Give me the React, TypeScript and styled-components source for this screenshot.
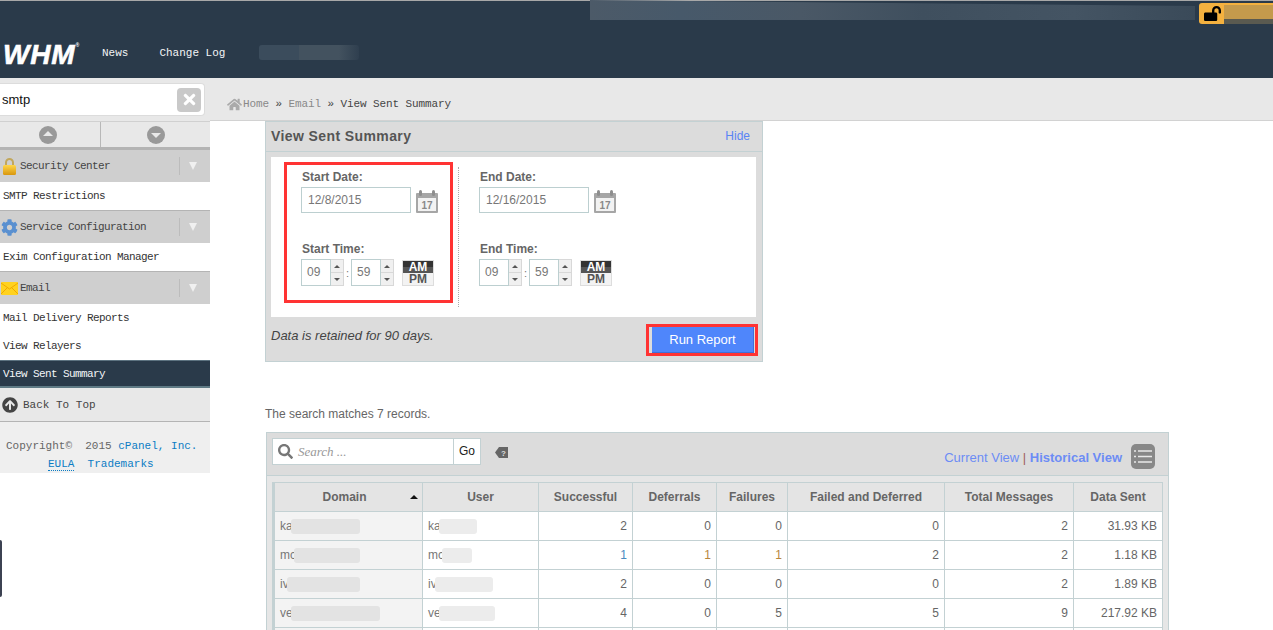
import React from 'react';
import styled, { createGlobalStyle } from 'styled-components';
import { FaArrowCircleUp, FaCog, FaHome, FaLockOpen, FaSearch, FaTimes } from 'react-icons/fa';

const mono = `"Liberation Mono", monospace`;
const sans = `"Liberation Sans", Arial, sans-serif`;

const GlobalStyle = createGlobalStyle`
  html, body {
    margin: 0;
    padding: 0;
    height: 100%;
    overflow: hidden;
    background: #fff;
    font-family: ${sans};
  }
  * { box-sizing: border-box; }
`;

const Page = styled.div`
  position: relative;
  width: 1273px;
  height: 630px;
  overflow: hidden;
  display: flex;
  flex-direction: column;
`;

/* header */
const Header = styled.header`
  height: 78px;
  flex: none;
  background: #2a3a4a;
  border-top: 1px solid #a8a8a8;
  display: flex;
  flex-direction: column;
`;

const TopStrip = styled.div`
  height: 23px;
  display: flex;
  justify-content: flex-end;
  align-items: flex-start;
  margin-top: -1px;
`;

const TopSmudge = styled.div`
  width: 605px;
  height: 20px;
  margin-right: 4px;
  background: linear-gradient(90deg, #4c5a68 0, #47596a 15%, #4a5866 35%, #3f4f5e 55%, #445463 80%, #3a4a59 100%);
  clip-path: polygon(0 0, 100% 30%, 100% 100%, 0 100%);
`;

const LockBadge = styled.div`
  width: 74px;
  height: 21px;
  margin-top: 3px;
  background: #f4b13f;
  border-radius: 3px 0 0 3px;
  display: flex;
  align-items: flex-start;
  padding: 2px 0 0 5px;
  color: #000;
  font-size: 17px;
  line-height: 1;
`;

const LockSmudge = styled.div`
  margin: 0 0 0 3px;
  flex: 1;
  height: 19px;
  background: linear-gradient(180deg, #c49a4c 0 75%, #5a5a50 75% 100%);
`;

const NavRow = styled.div`
  flex: 1;
  display: flex;
  align-items: center;
  padding: 6px 0 0 3px;
`;

const Logo = styled.div`
  width: 99px;
  margin-top: 2px;
  font: italic 700 28px/1 ${sans};
  letter-spacing: 0.8px;
  color: #fff;
  -webkit-text-stroke: 0.6px #fff;
  sup {
    font-size: 5px;
    letter-spacing: 0;
    -webkit-text-stroke: 0;
    vertical-align: 17px;
    line-height: 0;
  }
`;

const NavLink = styled.a`
  font: 11px/1 ${mono};
  color: #f2f4f6;
  margin-right: 31px;
`;

const NavSmudge = styled.div`
  width: 100px;
  height: 15px;
  margin: -2px 0 0 3px;
  border-radius: 3px;
  background: linear-gradient(90deg, #3b4c5c 0 40%, #43525f 40% 80%, #2f3f4f 100%);
`;

const Body = styled.div`
  flex: 1;
  display: flex;
  min-height: 0;
`;

/* sidebar */
const Sidebar = styled.aside`
  width: 210px;
  flex: none;
  display: flex;
  flex-direction: column;
`;

const SearchZone = styled.div`
  height: 43px;
  background: #e8e8e8;
  padding: 5px 5px 5px 0;
`;

const SearchBox = styled.div`
  height: 33px;
  background: #fff;
  border: 1px solid #dcdcdc;
  border-left: 0;
  border-radius: 0 4px 4px 0;
  display: flex;
  align-items: center;
  justify-content: space-between;
  padding: 0 3px 0 2px;
  font-size: 13px;
  color: #111;
`;

const ClearButton = styled.span`
  width: 24px;
  height: 24px;
  border-radius: 4px;
  background: #c9c9c9;
  color: #fff;
  display: flex;
  align-items: center;
  justify-content: center;
  font-size: 17px;
`;

const Pager = styled.div`
  height: 28px;
  display: flex;
  background: #e8e8e8;
  border-top: 1px solid #d0d0d0;
  border-bottom: 2px solid #b4b4b4;
`;

const PagerCell = styled.div<{ $grow?: boolean }>`
  flex: ${(p) => (p.$grow ? 1 : 'none')};
  width: ${(p) => (p.$grow ? 'auto' : '100px')};
  padding-right: ${(p) => (p.$grow ? '0' : '4px')};
  display: flex;
  align-items: center;
  justify-content: center;
  & + & { border-left: 1px solid #b8b8b8; }
`;

const PagerButton = styled.span<{ $down?: boolean }>`
  width: 18px;
  height: 18px;
  border-radius: 50%;
  background: #999;
  position: relative;
  &::after {
    content: '';
    position: absolute;
    left: 4px;
    top: ${(p) => (p.$down ? '7px' : '5px')};
    border-left: 5px solid transparent;
    border-right: 5px solid transparent;
    ${(p) => (p.$down ? 'border-top: 5px solid #e8e8e8;' : 'border-bottom: 5px solid #e8e8e8;')}
  }
`;

const SectionHead = styled.div`
  height: 33px;
  background: #cfcfcf;
  border-top: 1px solid #b4b4b4;
  display: flex;
  align-items: center;
  padding-left: 1px;
  font: 11px/1 ${mono};
  letter-spacing: -0.6px;
  color: #444;
`;

const SectionIcon = styled.span`
  width: 17px;
  height: 17px;
  margin-right: 2px;
  display: flex;
  align-items: center;
  justify-content: center;
  flex: none;
`;

const SectionTitle = styled.span`
  flex: 1;
`;

const SectionToggle = styled.span`
  width: 28px;
  height: 18px;
  margin-right: 3px;
  border-left: 1px solid #bcbcbc;
  padding-right: 2px;
  display: flex;
  align-items: center;
  justify-content: center;
  &::after {
    content: '';
    border-left: 4px solid transparent;
    border-right: 4px solid transparent;
    border-top: 8px solid #f0f0f0;
  }
`;

const MenuItem = styled.a<{ $active?: boolean }>`
  display: flex;
  align-items: center;
  height: 28px;
  padding: ${(p) => (p.$active ? '1px 0 0 3px' : '0 0 0 3px')};
  font: 11px/1 ${mono};
  letter-spacing: -0.6px;
  background: ${(p) => (p.$active ? '#2a3a4a' : '#fff')};
  color: ${(p) => (p.$active ? '#f4f6f8' : '#333')};
  ${(p) => p.$active && 'border-top: 1px solid #5c7280; border-bottom: 2px solid #5f7a85;'}
`;

const BackToTop = styled.a`
  height: 34px;
  background: #e8e8e8;
  border-bottom: 1px solid #b4b4b4;
  display: flex;
  align-items: center;
  gap: 5px;
  padding: 1px 0 0 2px;
  font: 11px/1 ${mono};
  color: #444;
  svg { color: #444; font-size: 16px; }
`;

const SideFooter = styled.div`
  height: 51px;
  background: #efefef;
  padding-top: 15px;
  font: 11px/18px ${mono};
  color: #666;
`;

const FooterLine = styled.div<{ $indent: number }>`
  padding-left: ${(p) => p.$indent}px;
  white-space: pre;
`;

const FooterLink = styled.a<{ $dotted?: boolean }>`
  color: #0b7cc4;
  ${(p) => p.$dotted && 'border-bottom: 1px dotted #0b7cc4;'}
`;

/* main area */
const Main = styled.main`
  flex: 1;
  min-width: 0;
  display: flex;
  flex-direction: column;
`;

const Breadcrumb = styled.nav`
  height: 43px;
  flex: none;
  background: #e8e8e8;
  border-bottom: 1px solid #d2d2d2;
  display: flex;
  align-items: center;
  padding: 11px 0 0 17px;
  font: 11px/1 ${mono};
  letter-spacing: -0.1px;
  white-space: pre;
  color: #444;
  svg { color: #aaa; font-size: 15px; margin-right: 1px; }
`;

const Crumb = styled.a`
  color: #888;
`;

const Content = styled.div`
  padding-left: 55px;
`;

const Panel = styled.section`
  width: 498px;
  height: 241px;
  background: #dcdcdc;
  border: 1px solid #c3d1d3;
  display: flex;
  flex-direction: column;
`;

const PanelHead = styled.div`
  height: 30px;
  flex: none;
  border-bottom: 1px solid #c3d1d3;
  display: flex;
  align-items: center;
  justify-content: space-between;
  padding: 0 12px 2px 5px;
`;

const PanelTitle = styled.h2`
  margin: 0;
  font: 700 14px/1 ${sans};
  letter-spacing: 0.4px;
  color: #555;
`;

const HideLink = styled.a`
  font-size: 12px;
  color: #5a84f5;
`;

const FormBox = styled.div`
  height: 160px;
  margin: 5px 6px 0 5px;
  background: #fff;
  padding: 5px 0 0 13px;
  display: flex;
  align-items: flex-start;
`;

const DateColumn = styled.div<{ $marked?: boolean }>`
  width: 169px;
  height: 141px;
  flex: none;
  border: 3px solid ${(p) => (p.$marked ? '#ff3333' : 'transparent')};
  padding: 5px 0 0 14px;
  display: flex;
  flex-direction: column;
`;

const Dots = styled.div`
  width: 1px;
  height: 140px;
  flex: none;
  margin: 5px 3px 0 5px;
  border-left: 1px dotted #aaa;
`;

const FieldLabel = styled.label`
  display: block;
  margin: 0 0 3px 1px;
  font: 700 12px/14px ${sans};
  color: #666;
`;

const DateRow = styled.div`
  display: flex;
  align-items: flex-end;
  gap: 5px;
  height: 26px;
  margin-bottom: 29px;
`;

const DateInput = styled.div`
  width: 110px;
  height: 26px;
  border: 1px solid #bccfd0;
  padding-left: 6px;
  font: 12px/24px ${sans};
  color: #777;
`;

const TimeRow = styled.div`
  display: flex;
  align-items: center;
  height: 27px;
`;

const TimeValue = styled.div`
  width: 30px;
  height: 27px;
  border: 1px solid #bccfd0;
  padding-left: 5px;
  font: 12px/25px ${sans};
  color: #777;
`;

const Stepper = styled.div`
  width: 13px;
  height: 27px;
  background: #f0f0f0;
  border: 1px solid #d8d8d8;
  border-left: 0;
  display: flex;
  flex-direction: column;
`;

const StepButton = styled.span<{ $down?: boolean }>`
  flex: 1;
  display: flex;
  align-items: center;
  justify-content: center;
  ${(p) => p.$down && 'border-top: 1px solid #d8d8d8;'}
  &::after {
    content: '';
    border-left: 3px solid transparent;
    border-right: 3px solid transparent;
    ${(p) => (p.$down ? 'border-top: 3px solid #555;' : 'border-bottom: 3px solid #555;')}
  }
`;

const Colon = styled.span`
  width: 7px;
  text-align: center;
  font-size: 11px;
  color: #777;
`;

const Meridiem = styled.div`
  width: 32px;
  height: 26px;
  margin-left: 8px;
  border: 1px solid #ddd;
  background: #f3f3f3;
  display: flex;
  flex-direction: column;
  font: 700 12px/12px ${sans};
  text-align: center;
  color: #555;
`;

const MeridiemOn = styled.span`
  height: 12px;
  background: linear-gradient(180deg, #333 0 50%, #555 50% 100%);
  color: #fff;
`;

const PanelFoot = styled.div`
  flex: 1;
  display: flex;
  align-items: flex-start;
  justify-content: space-between;
  padding: 11px 4px 0 5px;
`;

const Note = styled.p`
  margin: 0;
  font: italic 13px/16px ${sans};
  color: #444;
`;

const RunFrame = styled.div`
  width: 112px;
  height: 32px;
  margin-top: -4px;
  border: 3px solid #ff3333;
  padding: 0 0 0 3px;
`;

const RunButton = styled.button`
  display: block;
  width: 102px;
  height: 26px;
  padding: 0;
  border: 0;
  border-right: 1px solid #3f6fd8;
  border-bottom: 1px solid #3f6fd8;
  background: #4f86fb;
  color: #fff;
  font: 13px/1 ${sans};
`;

const Matches = styled.p`
  margin: 45px 0 11px 0;
  font: 12px/14px ${sans};
  color: #666;
`;

const TablePanel = styled.section`
  width: 903px;
  margin-left: 1px;
  background: #e6e6e6;
  border: 1px solid #c3d1d3;
  padding-bottom: 20px;
`;

const TableBar = styled.div`
  height: 43px;
  background: #dcdcdc;
  border-bottom: 1px solid #c3d1d3;
  display: flex;
  align-items: flex-start;
  padding: 5px 13px 0 5px;
`;

const SearchField = styled.div`
  width: 182px;
  height: 27px;
  background: #fff;
  border: 1px solid #c3d1d3;
  display: flex;
  align-items: center;
  padding-left: 5px;
  gap: 5px;
  font: italic 13px/1 "Liberation Serif", serif;
  color: #999;
  svg { color: #777; font-size: 15px; }
`;

const GoButton = styled.div`
  width: 27px;
  height: 27px;
  background: #fff;
  border: 1px solid #c3d1d3;
  border-left: 0;
  font: 12px/25px ${sans};
  text-align: center;
  color: #222;
`;

const TagIcon = styled.svg`
  width: 13px;
  height: 13px;
  margin: 8px 0 0 14px;
`;

const ViewLinks = styled.div`
  margin: 12px 9px 0 auto;
  font: 13px/16px ${sans};
  color: #a06060;
`;

const ViewLink = styled.a<{ $current?: boolean }>`
  color: #6c8cf5;
  font-weight: ${(p) => (p.$current ? 700 : 400)};
`;

const ListIcon = styled.svg`
  width: 24px;
  height: 25px;
  margin-top: 6px;
`;

const StatsTable = styled.table`
  width: 889px;
  margin: 6px 0 0 5px;
  border-collapse: collapse;
  table-layout: fixed;
  border-left: 3px solid #c3d1d3;
  font: 12px/1 ${sans};
  color: #666;
`;

const HeadCell = styled.th<{ $sorted?: boolean }>`
  height: 29px;
  padding: 0 ${(p) => (p.$sorted ? '8px' : '0')} 0 0;
  background: #e4e4e4;
  border: 1px solid #c3d1d3;
  font: 700 12px/1 ${sans};
  color: #666;
  position: relative;
`;

const SortArrow = styled.span`
  position: absolute;
  right: 4px;
  top: 12px;
  border-left: 4px solid transparent;
  border-right: 4px solid transparent;
  border-bottom: 4px solid #111;
`;

const Row = styled.tr``;

const NameCell = styled.td<{ $shaded?: boolean }>`
  height: 29px;
  padding: 0 0 0 5px;
  border: 1px solid #c3d1d3;
  background: ${(p) => (p.$shaded ? '#f3f3f3' : '#fff')};
  white-space: nowrap;
  overflow: hidden;
  color: #777;
`;

const NumCell = styled.td<{ $tone?: string }>`
  height: 29px;
  padding: 0 5px 0 0;
  border: 1px solid #c3d1d3;
  background: #fff;
  text-align: right;
  color: ${(p) => p.$tone ?? '#666'};
`;

const Smudge = styled.span<{ $w: number; $shade?: string }>`
  display: inline-block;
  vertical-align: middle;
  width: ${(p) => p.$w}px;
  height: 15px;
  margin-left: -2px;
  background: ${(p) => p.$shade ?? '#e3e3e3'};
  border-radius: 3px;
`;

const EdgeHandle = styled.div`
  position: absolute;
  left: 0;
  top: 540px;
  width: 2px;
  height: 57px;
  background: #3c4252;
  border-radius: 0 2px 2px 0;
`;

const PadlockIcon = () => (
  <svg width="15" height="17" viewBox="0 0 15 17">
    <defs>
      <linearGradient id="padlockBody" x1="0" y1="0" x2="0" y2="1">
        <stop offset="0" stopColor="#ffd64a" />
        <stop offset="1" stopColor="#d8960e" />
      </linearGradient>
    </defs>
    <path d="M4 8V4.5a3.5 3.5 0 017 0V8" fill="none" stroke="#c2a75c" strokeWidth="2" />
    <rect x="1" y="7" width="13" height="10" rx="1.5" fill="url(#padlockBody)" />
  </svg>
);

const MailIcon = () => (
  <svg width="17" height="13" viewBox="0 0 17 13">
    <rect width="17" height="13" rx="1" fill="#ffd21f" />
    <path d="M0 1l8.5 6L17 1M0 12l6-6M17 12l-6-6" fill="none" stroke="#f0a800" strokeWidth="1" />
  </svg>
);

const CalendarIcon = () => (
  <svg width="22" height="23" viewBox="0 0 22 23">
    <rect x="0" y="3" width="22" height="20" rx="1" fill="#a6a6a6" />
    <rect x="2" y="8" width="18" height="13" fill="#f2f2f2" />
    <rect x="3" y="0" width="3" height="6" rx="1.5" fill="#8e8e8e" />
    <rect x="16" y="0" width="3" height="6" rx="1.5" fill="#8e8e8e" />
    <text x="11" y="19" textAnchor="middle" fontFamily="Liberation Sans" fontWeight="700" fontSize="10" fill="#888">17</text>
  </svg>
);

interface SpinProps {
  value: string;
}

const SpinField = ({ value }: SpinProps) => (
  <>
    <TimeValue>{value}</TimeValue>
    <Stepper>
      <StepButton />
      <StepButton $down />
    </Stepper>
  </>
);

interface DateBlockProps {
  dateLabel: string;
  timeLabel: string;
  date: string;
  marked?: boolean;
}

const DateBlock = ({ dateLabel, timeLabel, date, marked }: DateBlockProps) => (
  <DateColumn $marked={marked}>
    <FieldLabel>{dateLabel}</FieldLabel>
    <DateRow>
      <DateInput>{date}</DateInput>
      <CalendarIcon />
    </DateRow>
    <FieldLabel>{timeLabel}</FieldLabel>
    <TimeRow>
      <SpinField value="09" />
      <Colon>:</Colon>
      <SpinField value="59" />
      <Meridiem>
        <MeridiemOn>AM</MeridiemOn>
        <span>PM</span>
      </Meridiem>
    </TimeRow>
  </DateColumn>
);

const columns = [149, 116, 94, 84, 71, 157, 129, 89];
const headings = ['Domain', 'User', 'Successful', 'Deferrals', 'Failures', 'Failed and Deferred', 'Total Messages', 'Data Sent'];

const rows = [
  { prefix: 'ka', dw: 69, uw: 38, cells: ['2', '0', '0', '0', '2', '31.93 KB'] },
  { prefix: 'mc', dw: 66, uw: 30, cells: ['1', '1', '1', '2', '2', '1.18 KB'] },
  { prefix: 'iv', dw: 73, uw: 58, cells: ['2', '0', '0', '0', '2', '1.89 KB'] },
  { prefix: 've', dw: 89, uw: 56, cells: ['4', '0', '5', '5', '9', '217.92 KB'] },
];

const toneFor = (rowIndex: number, cellIndex: number) => {
  if (rowIndex !== 1) return undefined;
  if (cellIndex === 0) return '#4a8ac0';
  if (cellIndex === 1 || cellIndex === 2) return '#b8863c';
  return undefined;
};

const App = () => {
  return (
    <Page>
      <GlobalStyle />
      <Header>
        <TopStrip>
          <TopSmudge />
          <LockBadge>
            <FaLockOpen />
            <LockSmudge />
          </LockBadge>
        </TopStrip>
        <NavRow>
          <Logo>
            WHM<sup>®</sup>
          </Logo>
          <NavLink>News</NavLink>
          <NavLink>Change Log</NavLink>
          <NavSmudge />
        </NavRow>
      </Header>
      <Body>
        <Sidebar>
          <SearchZone>
            <SearchBox>
              smtp
              <ClearButton>
                <FaTimes />
              </ClearButton>
            </SearchBox>
          </SearchZone>
          <Pager>
            <PagerCell>
              <PagerButton />
            </PagerCell>
            <PagerCell $grow>
              <PagerButton $down />
            </PagerCell>
          </Pager>
          <SectionHead>
            <SectionIcon>
              <PadlockIcon />
            </SectionIcon>
            <SectionTitle>Security Center</SectionTitle>
            <SectionToggle />
          </SectionHead>
          <MenuItem>SMTP Restrictions</MenuItem>
          <SectionHead>
            <SectionIcon>
              <FaCog color="#5a90d0" size={17} />
            </SectionIcon>
            <SectionTitle>Service Configuration</SectionTitle>
            <SectionToggle />
          </SectionHead>
          <MenuItem>Exim Configuration Manager</MenuItem>
          <SectionHead>
            <SectionIcon>
              <MailIcon />
            </SectionIcon>
            <SectionTitle>Email</SectionTitle>
            <SectionToggle />
          </SectionHead>
          <MenuItem>Mail Delivery Reports</MenuItem>
          <MenuItem>View Relayers</MenuItem>
          <MenuItem $active>View Sent Summary</MenuItem>
          <BackToTop>
            <FaArrowCircleUp />
            Back To Top
          </BackToTop>
          <SideFooter>
            <FooterLine $indent={6}>
              {'Copyright©  2015 '}
              <FooterLink>cPanel, Inc.</FooterLink>
            </FooterLine>
            <FooterLine $indent={48}>
              <FooterLink $dotted>EULA</FooterLink>
              {'  '}
              <FooterLink>Trademarks</FooterLink>
            </FooterLine>
          </SideFooter>
        </Sidebar>
        <Main>
          <Breadcrumb>
            <FaHome />
            <Crumb>Home</Crumb> » <Crumb>Email</Crumb> » View Sent Summary
          </Breadcrumb>
          <Content>
            <Panel>
              <PanelHead>
                <PanelTitle>View Sent Summary</PanelTitle>
                <HideLink>Hide</HideLink>
              </PanelHead>
              <FormBox>
                <DateBlock marked dateLabel="Start Date:" timeLabel="Start Time:" date="12/8/2015" />
                <Dots />
                <DateBlock dateLabel="End Date:" timeLabel="End Time:" date="12/16/2015" />
              </FormBox>
              <PanelFoot>
                <Note>Data is retained for 90 days.</Note>
                <RunFrame>
                  <RunButton>Run Report</RunButton>
                </RunFrame>
              </PanelFoot>
            </Panel>
            <Matches>The search matches 7 records.</Matches>
            <TablePanel>
              <TableBar>
                <SearchField>
                  <FaSearch />
                  Search ...
                </SearchField>
                <GoButton>Go</GoButton>
                <TagIcon viewBox="0 0 13 13">
                  <path d="M4 1h9v11H4L0 6.5z" fill="#666" />
                  <text x="8.5" y="9.5" textAnchor="middle" fontFamily="Liberation Sans" fontWeight="700" fontSize="8" fill="#ddd">?</text>
                </TagIcon>
                <ViewLinks>
                  <ViewLink>Current View</ViewLink> | <ViewLink $current>Historical View</ViewLink>
                </ViewLinks>
                <ListIcon viewBox="0 0 24 25">
                  <rect width="24" height="25" rx="5" fill="#888" />
                  <path d="M3 7h2M7 7h14M3 12.5h2M7 12.5h14M3 18h2M7 18h14" stroke="#e8e8e8" strokeWidth="1.5" />
                </ListIcon>
              </TableBar>
              <StatsTable>
                <colgroup>
                  {columns.map((width) => (
                    <col key={width} width={width} />
                  ))}
                </colgroup>
                <thead>
                  <Row>
                    {headings.map((heading, i) => (
                      <HeadCell key={heading} $sorted={i === 0}>
                        {heading}
                        {i === 0 && <SortArrow />}
                      </HeadCell>
                    ))}
                  </Row>
                </thead>
                <tbody>
                  {rows.map((row, r) => (
                    <Row key={row.prefix}>
                      <NameCell $shaded>
                        {row.prefix}
                        <Smudge $w={row.dw} />
                      </NameCell>
                      <NameCell>
                        {row.prefix}
                        <Smudge $w={row.uw} $shade="#ececec" />
                      </NameCell>
                      {row.cells.map((cell, c) => (
                        <NumCell key={c} $tone={toneFor(r, c)}>
                          {cell}
                        </NumCell>
                      ))}
                    </Row>
                  ))}
                  <Row>
                    <NameCell $shaded />
                    <NameCell />
                    {columns.slice(2).map((width) => (
                      <NumCell key={width} />
                    ))}
                  </Row>
                </tbody>
              </StatsTable>
            </TablePanel>
          </Content>
        </Main>
      </Body>
      <EdgeHandle />
    </Page>
  );
};

export default App;
